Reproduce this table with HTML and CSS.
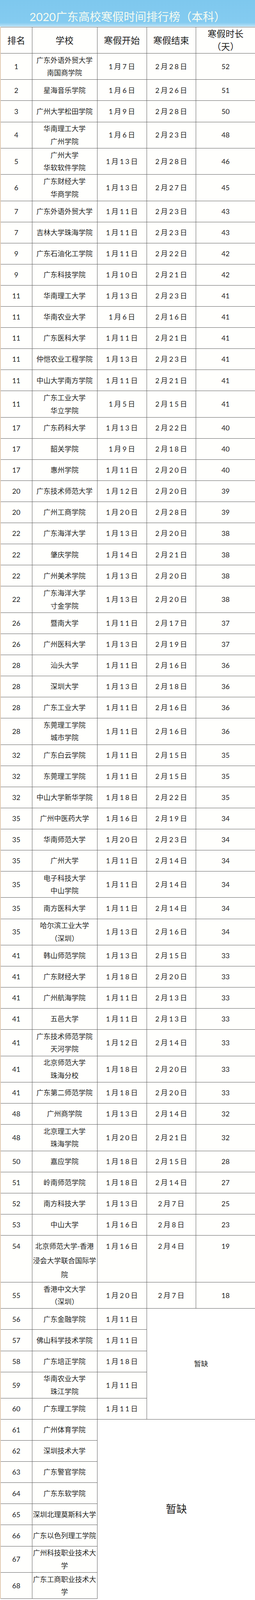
FILE: index.html
```
<!DOCTYPE html>
<html lang="zh-CN">
<head>
<meta charset="utf-8">
<title>2020广东高校寒假时间排行榜（本科）</title>
<link rel="stylesheet" href="styles.css">
</head>
<body>
<h1 class="title">2020广东高校寒假时间排行榜（本科）</h1>
<table class="rank">
<colgroup><col class="c1"><col class="c2"><col class="c3"><col class="c4"><col class="c5"></colgroup>
<thead>
<tr><th>排名</th><th>学校</th><th>寒假开始</th><th>寒假结束</th><th>寒假时长<br>（天）</th></tr>
</thead>
<tbody>
<tr class="l2"><td>1</td><td>广东外语外贸大学<br>南国商学院</td><td class="d">1月7日</td><td class="d">2月28日</td><td>52</td></tr>
<tr><td>2</td><td>星海音乐学院</td><td class="d">1月6日</td><td class="d">2月26日</td><td>51</td></tr>
<tr><td>3</td><td>广州大学松田学院</td><td class="d">1月9日</td><td class="d">2月28日</td><td>50</td></tr>
<tr class="l2"><td>4</td><td>华南理工大学<br>广州学院</td><td class="d">1月6日</td><td class="d">2月23日</td><td>48</td></tr>
<tr class="l2"><td>5</td><td>广州大学<br>华软软件学院</td><td class="d">1月13日</td><td class="d">2月28日</td><td>46</td></tr>
<tr class="l2"><td>6</td><td>广东财经大学<br>华商学院</td><td class="d">1月13日</td><td class="d">2月27日</td><td>45</td></tr>
<tr><td>7</td><td>广东外语外贸大学</td><td class="d">1月11日</td><td class="d">2月23日</td><td>43</td></tr>
<tr><td>7</td><td>吉林大学珠海学院</td><td class="d">1月11日</td><td class="d">2月23日</td><td>43</td></tr>
<tr><td>9</td><td>广东石油化工学院</td><td class="d">1月11日</td><td class="d">2月22日</td><td>42</td></tr>
<tr><td>9</td><td>广东科技学院</td><td class="d">1月10日</td><td class="d">2月21日</td><td>42</td></tr>
<tr><td>11</td><td>华南理工大学</td><td class="d">1月13日</td><td class="d">2月23日</td><td>41</td></tr>
<tr><td>11</td><td>华南农业大学</td><td class="d">1月6日</td><td class="d">2月16日</td><td>41</td></tr>
<tr><td>11</td><td>广东医科大学</td><td class="d">1月11日</td><td class="d">2月21日</td><td>41</td></tr>
<tr><td>11</td><td>仲恺农业工程学院</td><td class="d">1月13日</td><td class="d">2月23日</td><td>41</td></tr>
<tr><td>11</td><td>中山大学南方学院</td><td class="d">1月11日</td><td class="d">2月21日</td><td>41</td></tr>
<tr class="l2"><td>11</td><td>广东工业大学<br>华立学院</td><td class="d">1月5日</td><td class="d">2月15日</td><td>41</td></tr>
<tr><td>17</td><td>广东药科大学</td><td class="d">1月13日</td><td class="d">2月22日</td><td>40</td></tr>
<tr><td>17</td><td>韶关学院</td><td class="d">1月9日</td><td class="d">2月18日</td><td>40</td></tr>
<tr><td>17</td><td>惠州学院</td><td class="d">1月11日</td><td class="d">2月20日</td><td>40</td></tr>
<tr><td>20</td><td>广东技术师范大学</td><td class="d">1月12日</td><td class="d">2月20日</td><td>39</td></tr>
<tr><td>20</td><td>广州工商学院</td><td class="d">1月20日</td><td class="d">2月28日</td><td>39</td></tr>
<tr><td>22</td><td>广东海洋大学</td><td class="d">1月13日</td><td class="d">2月20日</td><td>38</td></tr>
<tr><td>22</td><td>肇庆学院</td><td class="d">1月14日</td><td class="d">2月21日</td><td>38</td></tr>
<tr><td>22</td><td>广州美术学院</td><td class="d">1月13日</td><td class="d">2月20日</td><td>38</td></tr>
<tr class="l2"><td>22</td><td>广东海洋大学<br>寸金学院</td><td class="d">1月13日</td><td class="d">2月20日</td><td>38</td></tr>
<tr><td>26</td><td>暨南大学</td><td class="d">1月11日</td><td class="d">2月17日</td><td>37</td></tr>
<tr><td>26</td><td>广州医科大学</td><td class="d">1月13日</td><td class="d">2月19日</td><td>37</td></tr>
<tr><td>28</td><td>汕头大学</td><td class="d">1月11日</td><td class="d">2月16日</td><td>36</td></tr>
<tr><td>28</td><td>深圳大学</td><td class="d">1月13日</td><td class="d">2月18日</td><td>36</td></tr>
<tr><td>28</td><td>广东工业大学</td><td class="d">1月11日</td><td class="d">2月16日</td><td>36</td></tr>
<tr class="l2"><td>28</td><td>东莞理工学院<br>城市学院</td><td class="d">1月11日</td><td class="d">2月16日</td><td>36</td></tr>
<tr><td>32</td><td>广东白云学院</td><td class="d">1月11日</td><td class="d">2月15日</td><td>35</td></tr>
<tr><td>32</td><td>东莞理工学院</td><td class="d">1月11日</td><td class="d">2月15日</td><td>35</td></tr>
<tr><td>32</td><td>中山大学新华学院</td><td class="d">1月18日</td><td class="d">2月22日</td><td>35</td></tr>
<tr><td>35</td><td>广州中医药大学</td><td class="d">1月16日</td><td class="d">2月19日</td><td>34</td></tr>
<tr><td>35</td><td>华南师范大学</td><td class="d">1月20日</td><td class="d">2月23日</td><td>34</td></tr>
<tr><td>35</td><td>广州大学</td><td class="d">1月11日</td><td class="d">2月14日</td><td>34</td></tr>
<tr class="l2"><td>35</td><td>电子科技大学<br>中山学院</td><td class="d">1月11日</td><td class="d">2月14日</td><td>34</td></tr>
<tr><td>35</td><td>南方医科大学</td><td class="d">1月11日</td><td class="d">2月14日</td><td>34</td></tr>
<tr class="l2"><td>35</td><td>哈尔滨工业大学<br>（深圳）</td><td class="d">1月13日</td><td class="d">2月16日</td><td>34</td></tr>
<tr><td>41</td><td>韩山师范学院</td><td class="d">1月13日</td><td class="d">2月15日</td><td>33</td></tr>
<tr><td>41</td><td>广东财经大学</td><td class="d">1月18日</td><td class="d">2月20日</td><td>33</td></tr>
<tr><td>41</td><td>广州航海学院</td><td class="d">1月11日</td><td class="d">2月13日</td><td>33</td></tr>
<tr><td>41</td><td>五邑大学</td><td class="d">1月11日</td><td class="d">2月13日</td><td>33</td></tr>
<tr class="l2"><td>41</td><td>广东技术师范学院<br>天河学院</td><td class="d">1月12日</td><td class="d">2月14日</td><td>33</td></tr>
<tr class="l2"><td>41</td><td>北京师范大学<br>珠海分校</td><td class="d">1月18日</td><td class="d">2月20日</td><td>33</td></tr>
<tr><td>41</td><td>广东第二师范学院</td><td class="d">1月18日</td><td class="d">2月20日</td><td>33</td></tr>
<tr><td>48</td><td>广州商学院</td><td class="d">1月13日</td><td class="d">2月14日</td><td>32</td></tr>
<tr class="l2"><td>48</td><td>北京理工大学<br>珠海学院</td><td class="d">1月20日</td><td class="d">2月21日</td><td>32</td></tr>
<tr><td>50</td><td>嘉应学院</td><td class="d">1月18日</td><td class="d">2月15日</td><td>28</td></tr>
<tr><td>51</td><td>岭南师范学院</td><td class="d">1月18日</td><td class="d">2月14日</td><td>27</td></tr>
<tr><td>52</td><td>南方科技大学</td><td class="d">1月13日</td><td class="d">2月7日</td><td>25</td></tr>
<tr><td>53</td><td>中山大学</td><td class="d">1月16日</td><td class="d">2月8日</td><td>23</td></tr>
<tr class="l3"><td>54</td><td>北京师范大学-香港<br>浸会大学联合国际学<br>院</td><td class="d">1月16日</td><td class="d">2月4日</td><td>19</td></tr>
<tr class="l2"><td>55</td><td>香港中文大学<br>（深圳）</td><td class="d">1月20日</td><td class="d">2月7日</td><td>18</td></tr>
<tr><td>56</td><td>广东金融学院</td><td class="d">1月11日</td><td class="miss" colspan="2" rowspan="5">暂缺</td></tr>
<tr><td>57</td><td>佛山科学技术学院</td><td class="d">1月11日</td></tr>
<tr><td>58</td><td>广东培正学院</td><td class="d">1月18日</td></tr>
<tr class="l2"><td>59</td><td>华南农业大学<br>珠江学院</td><td class="d">1月11日</td></tr>
<tr><td>60</td><td>广东理工学院</td><td class="d">1月11日</td></tr>
<tr><td>61</td><td>广州体育学院</td><td class="miss big" colspan="3" rowspan="8">暂缺</td></tr>
<tr><td>62</td><td>深圳技术大学</td></tr>
<tr><td>63</td><td>广东警官学院</td></tr>
<tr><td>64</td><td>广东东软学院</td></tr>
<tr><td>65</td><td>深圳北理莫斯科大学</td></tr>
<tr><td>66</td><td>广东以色列理工学院</td></tr>
<tr class="l2"><td>67</td><td>广州科技职业技术大<br>学</td></tr>
<tr class="l2"><td>68</td><td>广东工商职业技术大<br>学</td></tr>
</tbody>
</table>
</body>
</html>
```
FILE: styles.css
```
* { box-sizing: border-box; }
html, body { margin: 0; padding: 0; background: #ffffff; }
body {
  width: 654px;
  font-family: Lato, "Noto Sans CJK SC", sans-serif;
  color: #1f1f1f;
}
.title {
  margin: 0;
  height: 67.6px;
  padding-top: 24.4px;
  line-height: 37.5px;
  font-size: 29px;
  font-weight: 400;
  text-align: center;
  color: #f6fbf0;
  background: linear-gradient(#7ec8ee 0%, #84cbf0 85%, #b9e1f6 100%);
}
.rank {
  width: 654px;
  margin-top: 1.6px;
  border-collapse: collapse;
  table-layout: fixed;
  border-left: 2px solid #e2cbb3;
  background: #fffffd;
}
.c1 { width: 81px; }
.c2 { width: 167px; }
.c3 { width: 127px; }
.c4 { width: 126px; }
.c5 { width: 153px; }
.rank th, .rank td {
  border: 1px solid #5e5e5e;
  padding: 0;
  text-align: center;
  vertical-align: middle;
  line-height: 32.6px;
  font-weight: 400;
}
.rank thead tr { height: 66.8px; }
.rank th { font-size: 23px; color: #222; }
.rank td { font-size: 18px; color: #1f1f1f; }
.rank tbody tr { height: 54.08px; }
.rank tbody tr.l2 { height: 67.4px; }
.rank tbody tr.l3 { height: 116.5px; }
.rank tr.l3 td { vertical-align: top; padding-top: 9px; line-height: 36.7px; }
.rank td.d { letter-spacing: 3.5px; text-indent: 3.5px; }
.rank td.miss { background: #ffffff; }
.rank td.big {
  font-size: 27px;
  border-right-style: hidden;
  border-bottom-style: hidden;
}
```
